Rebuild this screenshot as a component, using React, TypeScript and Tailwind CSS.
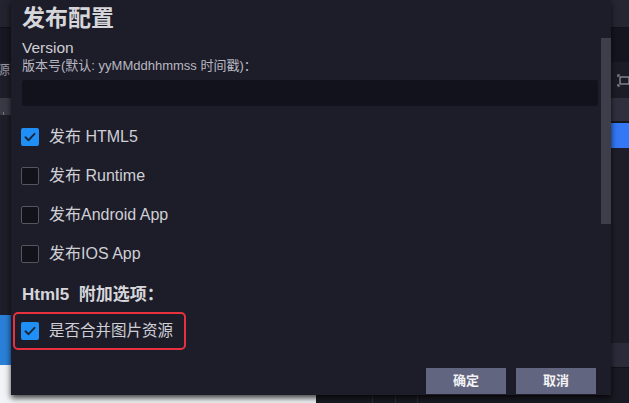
import React from "react";

const FONT = { fontFamily: '"Liberation Sans", "Noto Sans CJK SC", sans-serif' };

function Check({ checked }: { checked: boolean }) {
  if (checked) {
    return (
      <div className="w-[18px] h-[18px] rounded-[2px] bg-[#1f8ef5] flex items-center justify-center shrink-0">
        <svg width="14" height="14" viewBox="0 0 14 14">
          <path d="M2.5 7.2 L5.6 10.2 L11.5 3.8" fill="none" stroke="#1b2636" strokeWidth="1.9" strokeLinecap="round" strokeLinejoin="round" />
        </svg>
      </div>
    );
  }
  return <div className="w-[18px] h-[18px] rounded-[2px] border border-[#55555f] bg-[#12121b] shrink-0" />;
}

function Row({ checked, label }: { checked: boolean; label: string }) {
  return (
    <div className="h-[39px] flex items-center pl-[10px] gap-[10px]">
      <Check checked={checked} />
      <span className="text-[16px] leading-[18px] text-[#cfcfd4]">{label}</span>
    </div>
  );
}

export default function App() {
  return (
    <div className="relative w-[629px] h-[403px] overflow-hidden bg-[#1e1e2a]" style={FONT}>
      {/* background app */}
      <div className="flex w-full h-full">
        <div className="w-[318px] flex flex-col">
          <div className="h-[28px] bg-[#23232f] border-b border-[#111118]" />
          <div className="h-[34px] bg-[#181822]" />
          <div className="h-[36px] bg-[#1e1e2a] pt-[0px]">
            <span className="block -ml-[3px] text-[13px] leading-[16px] text-[#9a9aa4]">源</span>
          </div>
          <div className="h-[17px] bg-[#3a3a46] relative">
            <div className="absolute left-[3px] bottom-0 w-px h-[3px] bg-[#77777f]" />
          </div>
          <div className="h-[200px] bg-[#1e1e2a]" />
          <div className="h-[50px] bg-[#2a80d8]" />
          <div className="flex-1 bg-[#f1f3f6]" />
        </div>
        <div className="flex-1 flex flex-col">
          <div className="h-[28px] bg-[#262633] border-b border-[#111118]" />
          <div className="h-[34px] bg-[#15151f]" />
          <div className="h-[36px] bg-[#1c1c28] flex items-center pl-[301px]">
            <svg width="12" height="13" viewBox="0 0 12 13">
              <path d="M1 3 V1 H3 M1 10 V12 H3" fill="none" stroke="#9a9aa4" strokeWidth="1.2" />
              <rect x="3" y="3" width="9" height="7" fill="none" stroke="#9a9aa4" strokeWidth="1.2" />
            </svg>
          </div>
          <div className="h-[25px] bg-[#2e303e] border-b-2 border-[#17171f]" />
          <div className="h-[25px] bg-[#3478f6]" />
          <div className="h-[195px] bg-[#1e1e2a]" />
          <div className="h-[25px] bg-[#2a2c3a] border-b border-[#111118]" />
          <div className="flex-1 bg-[#1a1a24] flex">
            <div className="w-[57px] border-r border-[#2c2c38]" />
            <div className="w-[23px] border-r border-[#2c2c38]" />
            <div className="w-[22px] border-r border-[#2c2c38]" />
          </div>
        </div>
      </div>

      {/* dialog */}
      <div className="absolute left-[11px] top-0 w-[600px] h-[395px] bg-[#1d1d2a] shadow-[0_3px_6px_rgba(0,0,0,0.75)] flex flex-col">
        <div className="pl-[11px] pt-[4px] text-[23px] leading-[28px] font-bold text-[#d6d6da]">发布配置</div>
        <div className="pl-[11px] mt-[7px] text-[15.5px] leading-[18px] text-[#cfcfd4]">Version</div>
        <div className="pl-[11px] mt-[1px] text-[13px] leading-[16px] text-[#b8b8c0]">版本号(默认: yyMMddhhmmss 时间戳)：</div>
        <div className="ml-[11px] mt-[6px] w-[576px] h-[26px] rounded-[3px] bg-[#12121c]" />
        <div className="mt-[11px]">
          <Row checked label="发布 HTML5" />
          <Row checked={false} label="发布 Runtime" />
          <Row checked={false} label="发布Android App" />
          <Row checked={false} label="发布IOS App" />
        </div>
        <div className="pl-[11px] mt-[12px] text-[17px] leading-[20px] font-bold text-[#d6d6da]">Html5&nbsp; 附加选项：</div>
        <div className="ml-[2px] mt-[7px] w-[173px] h-[38px] rounded-[5px] border-2 border-[#e8313f] flex items-center pl-[6px] gap-[10px]">
          <Check checked />
          <span className="text-[15.5px] leading-[18px] text-[#cfcfd4]">是否合并图片资源</span>
        </div>
        <div className="mt-auto flex justify-end gap-[10px] pr-[15px] pb-[1px]">
          <button className="w-[80px] h-[26px] bg-[#626580] text-[13px] font-bold text-[#f2f2f4]">确定</button>
          <button className="w-[80px] h-[26px] bg-[#626580] text-[13px] font-bold text-[#f2f2f4]">取消</button>
        </div>
        <div className="absolute right-0 top-[38px] w-[10px] h-[186px] bg-[#3e3e4a]" />
      </div>
    </div>
  );
}
